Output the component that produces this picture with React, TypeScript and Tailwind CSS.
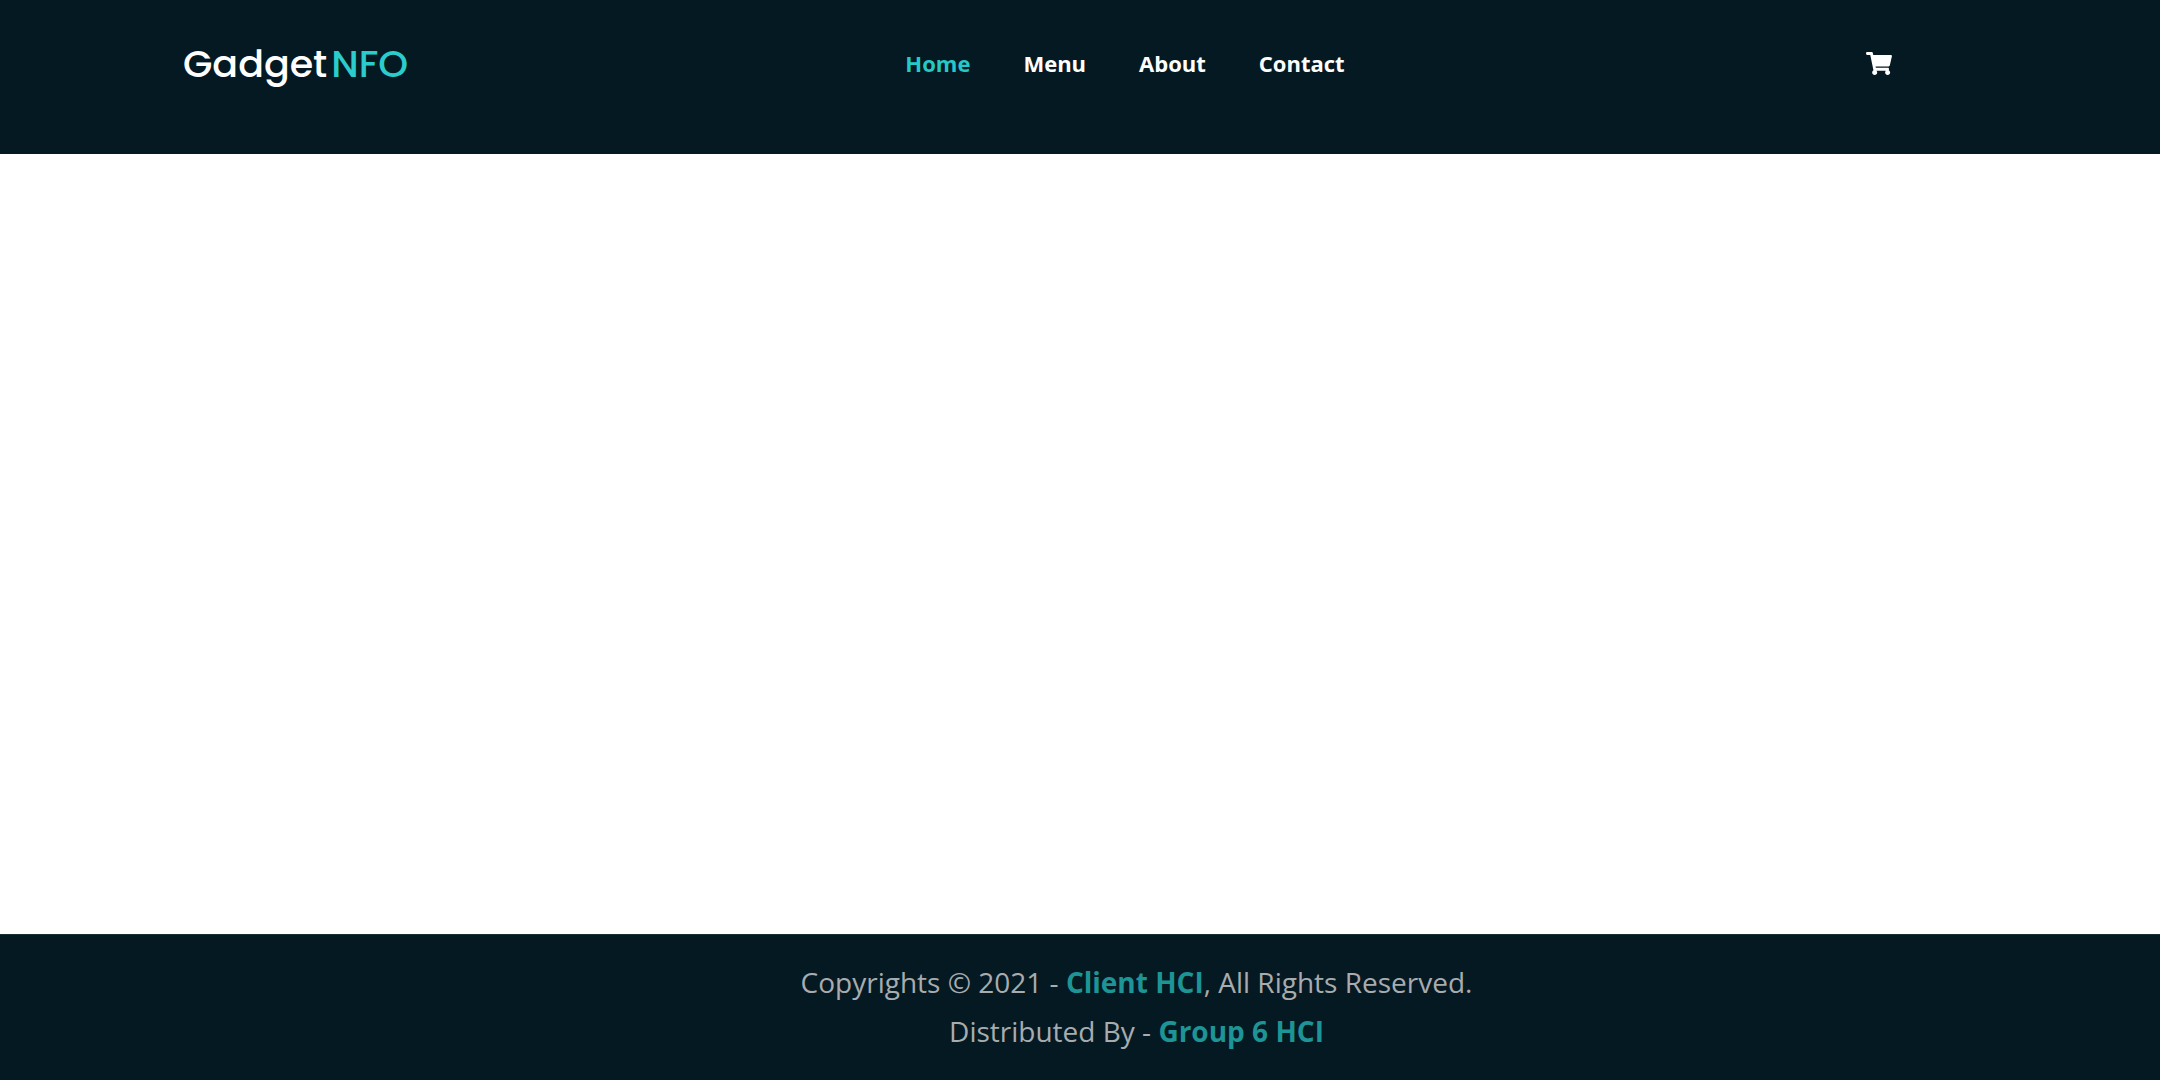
import React from 'react';
import { FaShoppingCart } from 'react-icons/fa';

const links = ['Home', 'Menu', 'About', 'Contact'];

export default function App() {
  return (
    <div className="flex min-h-screen flex-col bg-white font-['Open_Sans',sans-serif]">
      <header className="bg-[#051922] pt-[35px] pr-[93px] pb-[63px] pl-[183px]">
        <div className="grid h-14 grid-cols-[1fr_auto_1fr] items-center">
          <a href="#" className="flex gap-1 justify-self-start font-['Poppins','Inter',sans-serif] text-[38px] font-medium text-white">
            <span>Gadget</span>
            <span className="text-[#2acccc]">NFO</span>
          </a>
          <nav className="flex gap-[53px] text-[22px] font-bold text-white">
            {links.map((l) => (
              <a key={l} href="#" className={l === 'Home' ? 'text-[#25c8c8]' : ''}>{l}</a>
            ))}
          </nav>
          <button type="button" aria-label="Cart" className="mr-[175px] justify-self-end text-white">
            <FaShoppingCart className="h-[23px] w-[26px]" />
          </button>
        </div>
      </header>
      <main className="grow" />
      <footer className="border-t border-[#1b2f38] bg-[#051922] pt-[23px] pb-6 pl-[113px] text-center text-[28px] leading-[49px] text-[#a8acaf]">
        <p>Copyrights © 2021 - <a href="#" className="font-bold text-[#1d9496]">Client HCI</a>, All Rights Reserved.</p>
        <p>Distributed By - <a href="#" className="font-bold text-[#1d9496]">Group 6 HCI</a></p>
      </footer>
    </div>
  );
}
